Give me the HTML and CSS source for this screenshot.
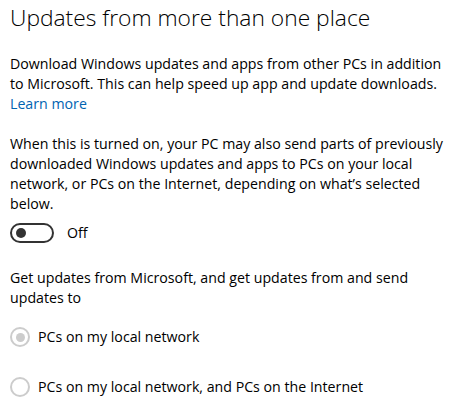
FILE: index.html
```html
<!DOCTYPE html>
<html lang="en">
<head>
    <meta charset="UTF-8">
    <title>Updates from more than one place</title>
    <link rel="stylesheet" href="styles.css">
</head>
<body>
    <h1>Updates from more than one place</h1>

    <p class="first">Download Windows updates and apps from other PCs in addition to Microsoft. This can help speed up app and update downloads.<br>
    <a href="#" class="link">Learn more</a></p>

    <p>When this is turned on, your PC may also send parts of previously downloaded Windows updates and apps to PCs on your local network, or PCs on the Internet, depending on what’s selected below.</p>

    <div class="toggle-row">
        <div class="toggle"><span class="knob"></span></div>
        <span class="toggle-label">Off</span>
    </div>

    <p class="group-label">Get updates from Microsoft, and get updates from and send updates to</p>

    <div class="radio-row">
        <span class="radio checked"></span>
        <span>PCs on my local network</span>
    </div>
    <div class="radio-row">
        <span class="radio"></span>
        <span>PCs on my local network, and PCs on the Internet</span>
    </div>
</body>
</html>
```

FILE: styles.css
```css
body {
    font-family: 'Open Sans', 'Liberation Sans', sans-serif;
    font-size: 14.2px;
    line-height: 20px;
    margin: 0;
    padding: 0 0 0 10px;
    background-color: white;
    color: #000;
}
h1 {
    font-size: 22.8px;
    font-weight: 300;
    line-height: 30px;
    margin: 3px 0 0 0;
}
p {
    margin: 20px 0 0 0;
}
p.first {
    margin-top: 21px;
}
.link {
    color: #0063b1;
    text-decoration: none;
}
.toggle-row {
    display: flex;
    align-items: center;
    margin-top: 9px;
    height: 20px;
}
.toggle {
    width: 36px;
    height: 16px;
    border: 2px solid #333;
    border-radius: 10px;
    display: flex;
    align-items: center;
    padding-left: 4px;
    box-sizing: content-box;
}
.knob {
    width: 10px;
    height: 10px;
    border-radius: 50%;
    background-color: #333;
}
.toggle-label {
    margin-left: 13px;
}
.group-label {
    margin-top: 25px;
}
.radio-row {
    display: flex;
    align-items: center;
    height: 20px;
    margin-top: 19px;
}
.radio-row + .radio-row {
    margin-top: 30px;
}
.radio {
    width: 16px;
    height: 16px;
    border: 2px solid #ccc;
    border-radius: 50%;
    display: flex;
    align-items: center;
    justify-content: center;
    margin-right: 8px;
}
.radio.checked::after {
    content: "";
    width: 9px;
    height: 9px;
    border-radius: 50%;
    background-color: #ccc;
}
```
